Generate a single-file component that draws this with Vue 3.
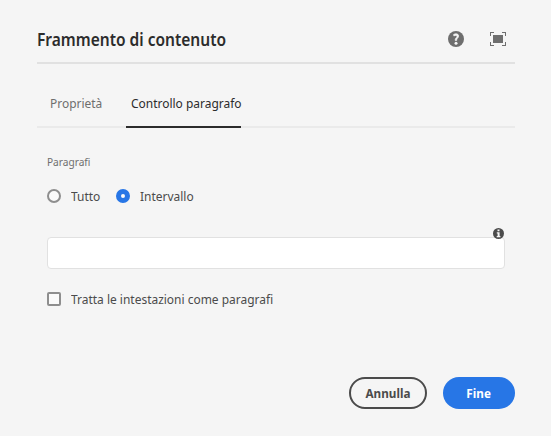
<script setup>
import { ref } from 'vue'

const tabs = [
  { id: 'properties', label: 'Proprietà' },
  { id: 'paragraph', label: 'Controllo paragrafo' },
]
const activeTab = ref('paragraph')
const options = [
  { value: 'all', label: 'Tutto' },
  { value: 'range', label: 'Intervallo' },
]
const scope = ref('range')
const range = ref('')
const headings = ref(false)
</script>

<template>
  <main class="dialog">
    <header class="header">
      <h1 class="title"><span class="text">Frammento di contenuto</span></h1>
      <div class="actions">
        <button class="icon-button" aria-label="?">
          <svg width="16" height="16" viewBox="0 0 16 16">
            <circle cx="8" cy="8" r="8" fill="#6e6e6e" />
            <path d="M5.6 3.5C6.3 3 7.1 2.8 8 2.8c1.6 0 2.6.9 2.6 2.2 0 1.9-1.9 2.2-1.9 3.9v.5H7.2V8.8C7.2 6.900 9 6.600 9 5.400c0-.7-.5-1-1.200-1-.7 0-1.300.200-1.900.6z" fill="#f5f5f5" stroke="#f5f5f5" stroke-width=".7" />
            <circle cx="8" cy="12.200" r="1.500" fill="#f5f5f5" />
          </svg>
        </button>
        <button class="icon-button" aria-label="[ ]">
          <svg width="16" height="14" viewBox="0 0 16 14" shape-rendering="crispEdges">
            <path d="M0 0h4v1H1v3H0zM12 0h4v4h-1V1h-3zM0 10h1v3h3v1H0zM15 10h1v4h-4v-1h3zM3 3h10v8H3z" fill="#6e6e6e" />
          </svg>
        </button>
      </div>
    </header>

    <nav class="tabs">
      <button
        v-for="tab in tabs"
        :key="tab.id"
        class="tab"
        :class="[tab.id, { active: tab.id === activeTab }]"
        @click="activeTab = tab.id"
      ><span class="text">{{ tab.label }}</span></button>
    </nav>

    <section class="form">
      <div class="field-label"><span class="text">Paragrafi</span></div>
      <div class="radios">
        <label v-for="option in options" :key="option.value" class="choice" :class="option.value">
          <input v-model="scope" class="radio" type="radio" name="scope" :value="option.value" />
          <span class="text">{{ option.label }}</span>
        </label>
      </div>
      <div class="field">
        <input v-model="range" class="textbox" type="text" />
        <svg class="info" width="11" height="11" viewBox="0 0 11 11">
          <circle cx="5.5" cy="5.5" r="5.5" fill="#4b4b4b" />
          <path d="M4.500 1.500h2v1.800h-2zM3.800 4.300h2.800v3.700h.8v1.200H3.700V8h.9V5.500h-.8z" fill="#f5f5f5" />
        </svg>
      </div>
      <label class="choice headings">
        <input v-model="headings" class="checkbox" type="checkbox" />
        <span class="text">Tratta le intestazioni come paragrafi</span>
      </label>
    </section>

    <footer class="footer">
      <button class="button cancel"><span class="text">Annulla</span></button>
      <button class="button done"><span class="text">Fine</span></button>
    </footer>
  </main>
</template>

<style>
body {
  background: #f5f5f5;
}
</style>

<style scoped>
.dialog {
  box-sizing: border-box;
  height: 436px;
  padding: 16px 36px 27px 37px;
  display: flex;
  flex-direction: column;
  background: #f5f5f5;
  color: #4b4b4b;
  font-family: "Noto Sans", "Open Sans", sans-serif;
  font-size: 13px;
  line-height: 18px;
  white-space: nowrap;
}
button {
  margin: 0;
  padding: 0;
  border: 0;
  background: none;
  color: inherit;
  font: inherit;
}
/* Slightly condensed lettering */
.text {
  display: inline-block;
  transform: scaleX(0.92);
  transform-origin: left center;
}
.header {
  height: 46px;
  display: flex;
  justify-content: space-between;
  align-items: center;
  border-bottom: 2px solid #e1e1e1;
}
.title {
  margin: 0;
  padding-top: 1px;
  font-size: 17px;
  line-height: 24px;
  font-weight: 600;
  color: #2c2c2c;
}
.title .text {
  transform: scaleX(0.913);
}
.actions {
  display: flex;
  align-items: center;
  gap: 26px;
  padding-right: 9px;
}
.icon-button {
  display: flex;
}
.tabs {
  display: flex;
  gap: 24px;
  height: 46px;
  margin-top: 16px;
  padding-left: 13px;
  border-bottom: 2px solid #eaeaea;
}
.tab {
  box-sizing: border-box;
  height: 48px;
  width: 52px;
  padding-bottom: 2px;
  text-align: left;
  color: #6e6e6e;
}
.tab.paragraph {
  width: 115px;
  padding-left: 5px;
}
.tab.active {
  border-bottom: 2px solid #2c2c2c;
  padding-bottom: 0;
  color: #2c2c2c;
}
.form {
  padding: 25px 10px 0;
}
.field-label {
  font-size: 11px;
  color: #6e6e6e;
}
.radios {
  display: flex;
  gap: 16px;
  margin-top: 16px;
}
.choice {
  display: flex;
  align-items: center;
  gap: 10px;
}
.choice.all {
  width: 53px;
}
.radio,
.checkbox {
  appearance: none;
  box-sizing: border-box;
  flex: none;
  width: 14px;
  height: 14px;
  margin: 0;
  border: 2px solid #8e8e8e;
  border-radius: 50%;
  background: #fafafa;
}
.radio:checked {
  border: 5px solid #2776e6;
}
.checkbox {
  border-radius: 2px;
}
.field {
  position: relative;
  margin-top: 32px;
}
.textbox {
  display: block;
  box-sizing: border-box;
  width: 100%;
  height: 32px;
  margin: 0;
  padding: 0 12px;
  border: 1px solid #e1e1e1;
  border-radius: 4px;
  outline: none;
  background: #fff;
  font: inherit;
}
.info {
  position: absolute;
  right: 1px;
  top: -9px;
}
.headings {
  margin-top: 21px;
}
.footer {
  display: flex;
  justify-content: flex-end;
  gap: 16px;
  margin-top: auto;
}
.button {
  box-sizing: border-box;
  height: 32px;
  border-radius: 16px;
  font-weight: 700;
}
.button .text {
  transform: scaleX(0.9);
  transform-origin: center;
}
.cancel {
  width: 78px;
  padding-bottom: 1px;
  border: 2px solid #4b4b4b;
}
.done {
  width: 72px;
  padding-bottom: 1px;
  background: #2776e6;
  color: #fff;
}
</style>
